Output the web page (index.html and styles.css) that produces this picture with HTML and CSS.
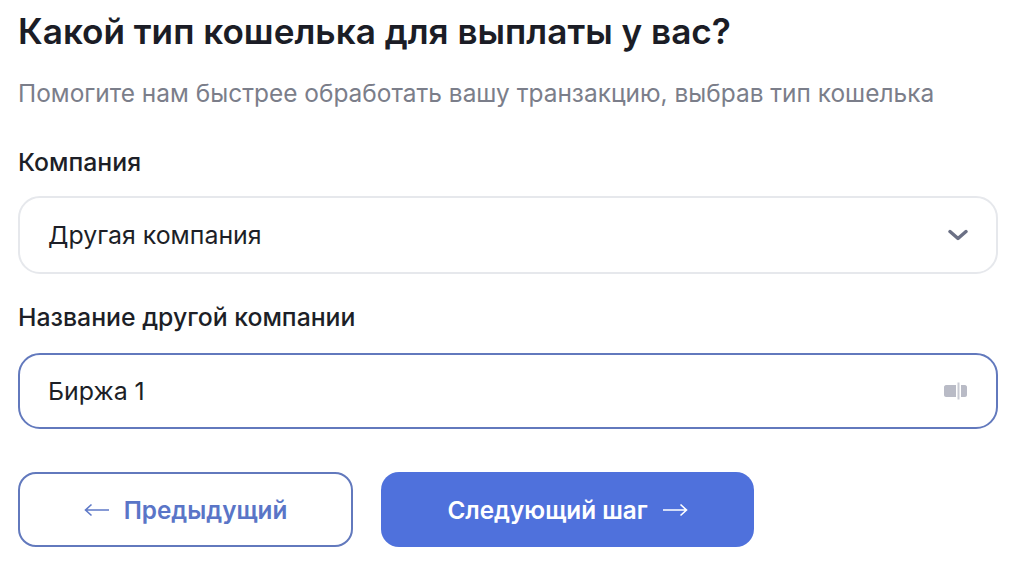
FILE: index.html
```html
<!DOCTYPE html>
<html lang="ru">
<head>
  <meta charset="UTF-8">
  <title>Тип кошелька</title>
  <link rel="stylesheet" href="styles.css">
</head>
<body>
  <div class="wallet-form">
    <h1 class="form-title">Какой тип кошелька для выплаты у вас?</h1>
    <p class="form-hint">Помогите нам быстрее обработать вашу транзакцию, выбрав тип кошелька</p>

    <div class="field-label company-label">Компания</div>
    <div class="field field-select">
      <span>Другая компания</span>
      <svg class="chevron" width="20" height="12" viewBox="0 0 20 12" fill="none">
        <path d="M2 2.5L10 9.5L18 2.5" stroke="#6b7085" stroke-width="3.4" stroke-linecap="round" stroke-linejoin="round"/>
      </svg>
    </div>

    <div class="field-label other-label">Название другой компании</div>
    <div class="field field-active">
      <span>Биржа 1</span>
      <svg class="autofill" width="26" height="18" viewBox="0 0 26 18" fill="none">
        <path d="M3 3H13V15H3C2 15 1 14 1 13V5C1 4 2 3 3 3Z" fill="#b9bbc6"/>
        <rect x="14.5" y="0.5" width="2" height="17" fill="#c9cbd3"/>
        <path d="M18 3H22C23 3 24 4 24 5V13C24 14 23 15 22 15H18Z" fill="#b9bbc6"/>
      </svg>
    </div>

    <div class="form-actions">
      <button class="btn btn-back">
        <svg width="26" height="14" viewBox="0 0 26 14" fill="none">
          <path d="M25 7H1.5M7.5 1.5L1.5 7L7.5 12.5" stroke="#5f7ac8" stroke-width="1.6"/>
        </svg>
        Предыдущий
      </button>
      <button class="btn btn-next">
        Следующий шаг
        <svg width="26" height="14" viewBox="0 0 26 14" fill="none">
          <path d="M1 7H24.5M18.5 1.5L24.5 7L18.5 12.5" stroke="#fff" stroke-width="1.6"/>
        </svg>
      </button>
    </div>
  </div>
</body>
</html>
```

FILE: styles.css
```css
body {
  margin: 0;
  background-color: #fff;
  font-family: 'Inter', 'Liberation Sans', sans-serif;
  color: #1d1f27;
}

.wallet-form {
  padding: 10px 26px 0 18px;
}

.form-title {
  margin: 0;
  font-size: 35.15px;
  line-height: 42px;
  font-weight: 600;
  color: #1b1d26;
}

.form-hint {
  margin: 25px 0 0;
  font-size: 24.45px;
  line-height: 32px;
  color: #7b7e8a;
}

.field-label {
  font-size: 24.8px;
  line-height: 30px;
  font-weight: 500;
}

.company-label {
  margin-top: 38px;
}

.other-label {
  margin-top: 28px;
}

.field {
  display: flex;
  align-items: center;
  justify-content: space-between;
  box-sizing: border-box;
  height: 78px;
  padding: 0 28px;
  border: 2px solid #e6e8ec;
  border-radius: 22px;
  font-size: 24.9px;
}

.field-select {
  margin-top: 19px;
}

.field-active {
  height: 76px;
  margin-top: 21px;
  border-color: #6279bd;
  padding-right: 27px;
}

.form-actions {
  display: flex;
  gap: 28px;
  margin-top: 43px;
}

.btn {
  display: flex;
  align-items: center;
  justify-content: center;
  gap: 14px;
  box-sizing: border-box;
  height: 75px;
  border-radius: 18px;
  font-family: inherit;
  font-size: 24.3px;
  font-weight: 600;
}

.btn-back {
  width: 335px;
  background-color: #fff;
  border: 2px solid #6279bd;
  color: #5a75c7;
}

.btn-next {
  width: 373px;
  background-color: #4f71dc;
  border: none;
  color: #fff;
}
```
